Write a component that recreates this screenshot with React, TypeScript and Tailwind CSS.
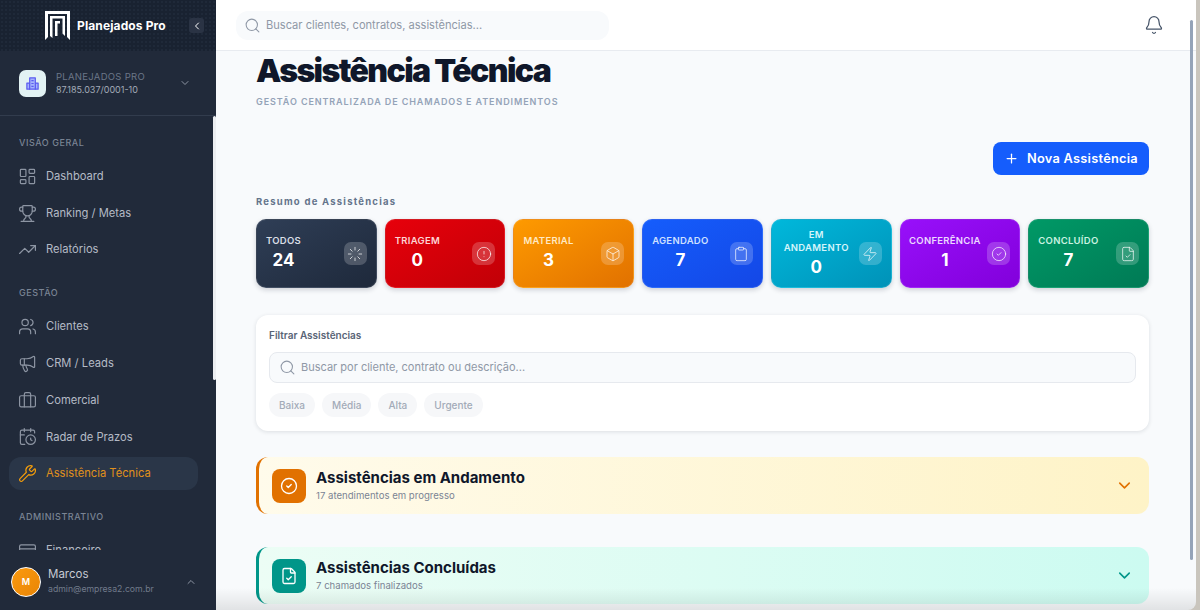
import {
  Bell,
  Box,
  Briefcase,
  CalendarClock,
  ChevronDown,
  ChevronLeft,
  ChevronUp,
  CircleAlert,
  CircleCheck,
  Clipboard,
  CreditCard,
  FileCheck,
  LayoutDashboard,
  Loader,
  Megaphone,
  Plus,
  Search,
  TrendingUp,
  Trophy,
  Users,
  Wrench,
  Zap,
} from "lucide-react"

function NavItem({ icon: Icon, label, active }: { icon: typeof Users; label: string; active?: boolean }) {
  return (
    <div
      className={
        active
          ? "flex h-[33px] items-center gap-[9px] rounded-xl bg-[#2a3648] pl-[9px] text-[11.2px] text-[#e0911c]"
          : "flex h-[33px] items-center gap-[9px] rounded-xl pl-[9px] text-[11.2px] text-[#b4bac5]"
      }
    >
      <Icon className={active ? "h-[19px] w-[19px] text-[#f59e0b]" : "h-[19px] w-[19px] text-[#8d95a3]"} strokeWidth={1.5} />
      <span>{label}</span>
    </div>
  )
}

function NavLabel({ children }: { children: string }) {
  return <div className="mb-[10px] h-[14px] pl-[10px] text-[9px] leading-[14px] font-medium tracking-[0.06em] text-[#7a8494]">{children}</div>
}

const cards = [
  { label: "TODOS", value: "24", icon: Loader, bg: "bg-gradient-to-br from-[#2f3e56] to-[#1e293b]", text: "text-[#d9dee6]" },
  { label: "TRIAGEM", value: "0", icon: CircleAlert, bg: "bg-gradient-to-br from-[#e7000b] to-[#c10007]", text: "text-[#fdd5d5]" },
  { label: "MATERIAL", value: "3", icon: Box, bg: "bg-gradient-to-br from-[#fe9a00] to-[#e17100]", text: "text-[#ffe9c4]" },
  { label: "AGENDADO", value: "7", icon: Clipboard, bg: "bg-gradient-to-br from-[#155dfc] to-[#1447e6]", text: "text-[#cfe0ff]" },
  { label: "EM ANDAMENTO", value: "0", icon: Zap, bg: "bg-gradient-to-br from-[#00b8db] to-[#0092b8]", text: "text-[#d3f5fb]" },
  { label: "CONFERÊNCIA", value: "1", icon: CircleCheck, bg: "bg-gradient-to-br from-[#9810fa] to-[#8200db]", text: "text-[#ecd8ff]" },
  { label: "CONCLUÍDO", value: "7", icon: FileCheck, bg: "bg-gradient-to-br from-[#009966] to-[#007a55]", text: "text-[#c9f2e1]" },
]

export default function App() {
  return (
    <div className="relative flex h-[610px] w-[1200px] overflow-hidden bg-[#c9c5bd] font-['Inter',sans-serif]">
      {/* sidebar */}
      <aside className="relative flex h-full w-[216px] shrink-0 flex-col bg-[#212a3a]">
        <div className="flex h-[51px] shrink-0 items-center bg-[#192231] bg-[radial-gradient(#1f2939_1px,transparent_1px)] bg-[length:4px_4px] pr-[12px] pl-[45px]">
          <svg viewBox="0 0 25 29" className="h-[29px] w-[25px] shrink-0">
            <path d="M0 0H25V29L22 26V3H3V26L0 29Z" fill="#fff" />
            <path d="M5 5H20V25L17.5 22.5V7.5H7.5V27L5 25Z" fill="#fff" />
            <path d="M10 10H15V12.5H12.5V25H10Z" fill="#fff" />
          </svg>
          <span className="ml-[7px] text-[12px] font-bold tracking-[0.01em] text-white">Planejados Pro</span>
          <div className="ml-auto flex h-[15px] w-[15px] items-center justify-center rounded-[3px] bg-[#2a3344]">
            <ChevronLeft className="h-3 w-3 text-white" strokeWidth={2} />
          </div>
        </div>

        <div className="flex h-[65px] shrink-0 items-center border-b border-[#323c4d] pr-[25px] pl-[19px]">
          <div className="flex h-[27px] w-[27px] items-center justify-center rounded-[7px] bg-[#e2f2f3]">
            <svg viewBox="0 0 16 16" className="h-[15px] w-[15px]" fill="#a5b4fc" stroke="#5b5cf0" strokeWidth="1.3" strokeLinejoin="round">
              <path d="M2 7.5h3V14H2z" />
              <path d="M11 7.5h3V14h-3z" />
              <path d="M5 2h6v12H5z" />
              <path d="M6.8 5h2.4M6.8 8h2.4M6.8 11h2.4" fill="none" />
            </svg>
          </div>
          <div className="ml-[10px] min-w-0 flex-1">
            <div className="text-[9.5px] leading-[13px] tracking-[0.03em] text-[#6b7688]">PLANEJADOS PRO</div>
            <div className="text-[9px] leading-[13px] text-[#a3abb8]">87.185.037/0001-10</div>
          </div>
          <ChevronDown className="h-3 w-3 text-[#8d95a3]" />
        </div>

        <nav className="min-h-0 flex-1 overflow-hidden pt-[20px] pr-[18px] pl-[9px]">
          <NavLabel>VISÃO GERAL</NavLabel>
          <div className="flex flex-col gap-[3.7px]">
            <NavItem icon={LayoutDashboard} label="Dashboard" />
            <NavItem icon={Trophy} label="Ranking / Metas" />
            <NavItem icon={TrendingUp} label="Relatórios" />
          </div>
          <div className="mt-[20px]">
            <NavLabel>GESTÃO</NavLabel>
          </div>
          <div className="flex flex-col gap-[3.7px]">
            <NavItem icon={Users} label="Clientes" />
            <NavItem icon={Megaphone} label="CRM / Leads" />
            <NavItem icon={Briefcase} label="Comercial" />
            <NavItem icon={CalendarClock} label="Radar de Prazos" />
            <NavItem icon={Wrench} label="Assistência Técnica" active />
          </div>
          <div className="mt-[20px]">
            <NavLabel>ADMINISTRATIVO</NavLabel>
          </div>
          <NavItem icon={CreditCard} label="Financeiro" />
        </nav>

        <div className="flex h-[60px] shrink-0 items-center pt-[3px] pr-[19px] pl-[11px]">
          <div className="flex h-[30px] w-[30px] items-center justify-center rounded-full border-[1.5px] border-white bg-gradient-to-br from-[#fb9a0e] to-[#e98506] text-[9px] font-semibold text-white">M</div>
          <div className="ml-[7px] min-w-0 flex-1">
            <div className="text-[11.5px] leading-[15px] text-[#c6cbd3]">Marcos</div>
            <div className="text-[8.7px] leading-[14px] text-[#717b8b]">admin@empresa2.com.br</div>
          </div>
          <ChevronUp className="h-3 w-3 text-[#8d95a3]" />
        </div>

        {/* scrollbar thumb */}
        <div className="absolute top-[116px] right-0 h-[264px] w-[3px] rounded-full bg-[#eceef1]" />
      </aside>

      {/* main */}
      <div className="relative flex h-full w-[980px] shrink-0 flex-col rounded-br-[8px] bg-[#f8fafc]">
        <header className="flex h-[51px] shrink-0 items-center justify-between border-b border-[#e8ebf0] bg-white pr-[32px] pl-[20px]">
          <div className="flex h-[29px] w-[373px] items-center gap-[5px] rounded-xl bg-[#f8fafc] pl-[8px]">
            <Search className="h-[17px] w-[17px] text-[#8f98a6]" strokeWidth={1.5} />
            <span className="text-[11.1px] text-[#8f98a6]">Buscar clientes, contratos, assistências...</span>
          </div>
          <Bell className="h-[20px] w-[20px] text-[#475569]" strokeWidth={1.5} />
        </header>

        <main className="min-h-0 flex-1 overflow-hidden pr-[47px] pl-[40px]">
          <h1 className="mt-[2px] text-[32px] leading-[36px] font-black tracking-[-0.05em] text-[#0f172a]">Assistência Técnica</h1>
          <p className="mt-[6px] text-[9px] leading-[14px] font-semibold tracking-[0.1em] text-[#94a3b8]">GESTÃO CENTRALIZADA DE CHAMADOS E ATENDIMENTOS</p>

          <div className="mt-[33px] flex justify-end">
            <button className="flex h-[33px] w-[156px] items-center justify-center gap-[8px] rounded-lg bg-[#155dfc] text-[12.8px] font-semibold tracking-[0.02em] text-white">
              <Plus className="h-[15px] w-[15px]" strokeWidth={2} />
              Nova Assistência
            </button>
          </div>

          <div className="mt-[21px] text-[9.5px] leading-[12px] font-bold tracking-[0.13em] text-[#64748b]">Resumo de Assistências</div>

          <div className="mt-[11px] grid grid-cols-7 gap-2">
            {cards.map((c) => (
              <div key={c.label} className={`flex h-[69px] items-center justify-between rounded-[10px] border border-white/10 px-[9px] shadow-[0_2px_5px_rgba(15,23,42,0.18)] ${c.bg}`}>
                <div className="-mt-[2px] flex min-w-0 flex-col items-center">
                  <div className={`text-center text-[9.5px] leading-[13px] font-semibold tracking-[0.03em] ${c.text}`}>{c.label}</div>
                  <div className="mt-[2px] text-[17px] leading-[22px] font-bold text-white">{c.value}</div>
                </div>
                <div className="ml-[7px] flex h-[23px] w-[23px] shrink-0 items-center justify-center rounded-[7px] bg-white/20">
                  <c.icon className="h-[16px] w-[16px] text-white/70" strokeWidth={1.5} />
                </div>
              </div>
            ))}
          </div>

          <section className="mt-[27px] h-[116px] rounded-xl bg-white px-[13px] pt-[14px] shadow-[0_1px_4px_rgba(15,23,42,0.12)]">
            <div className="text-[10px] leading-[12px] font-semibold text-[#596476]">Filtrar Assistências</div>
            <div className="mt-[11px] flex h-[31px] items-center gap-[5px] rounded-lg border border-[#e6e9ee] bg-[#f8fafc] pl-[9px]">
              <Search className="h-[17px] w-[17px] text-[#8f98a6]" strokeWidth={1.5} />
              <span className="text-[11px] text-[#8f98a6]">Buscar por cliente, contrato ou descrição...</span>
            </div>
            <div className="mt-[10px] flex gap-[7px]">
              {["Baixa", "Média", "Alta", "Urgente"].map((p) => (
                <span key={p} className="flex h-[24px] items-center rounded-xl bg-[#f6f7f9] px-[10px] text-[10px] font-medium text-[#a3abb8]">{p}</span>
              ))}
            </div>
          </section>

          <section className="mt-[26px] flex h-[57px] items-center rounded-xl border-l-[3px] border-[#e17100] bg-gradient-to-r from-[#fffbeb] to-[#fef3c7] pr-[15px] pl-[13px]">
            <div className="flex h-[34px] w-[34px] items-center justify-center rounded-lg bg-[#e17100]">
              <CircleCheck className="h-[18px] w-[18px] text-white" strokeWidth={1.75} />
            </div>
            <div className="ml-[10px] flex-1">
              <div className="text-[15px] leading-[20px] font-bold text-[#0f172a]">Assistências em Andamento</div>
              <div className="mt-[1px] text-[9.6px] leading-[14px] text-[#7b8494]">17 atendimentos em progresso</div>
            </div>
            <ChevronDown className="h-[19px] w-[19px] text-[#e17100]" strokeWidth={2} />
          </section>

          <section className="mt-[33px] flex h-[57px] items-center rounded-xl border-l-[3px] border-[#009689] bg-gradient-to-r from-[#ecfdf5] to-[#ccfbf1] pr-[15px] pl-[13px]">
            <div className="flex h-[34px] w-[34px] items-center justify-center rounded-lg bg-[#009689]">
              <FileCheck className="h-[18px] w-[18px] text-white" strokeWidth={1.75} />
            </div>
            <div className="ml-[10px] flex-1">
              <div className="text-[15px] leading-[20px] font-bold text-[#0f172a]">Assistências Concluídas</div>
              <div className="mt-[1px] text-[9.6px] leading-[14px] text-[#7b8494]">7 chamados finalizados</div>
            </div>
            <ChevronDown className="h-[19px] w-[19px] text-[#009689]" strokeWidth={2} />
          </section>
        </main>

        {/* main scrollbar */}
        <div className="absolute top-[20px] right-[3px] h-[540px] w-[3px] rounded-full bg-[#94a3b8]" />
        {/* bottom window shade */}
        <div className="pointer-events-none absolute right-0 bottom-0 left-0 h-[22px] rounded-br-[8px] bg-gradient-to-b from-transparent to-[#00000018]" />
      </div>
    </div>
  )
}
